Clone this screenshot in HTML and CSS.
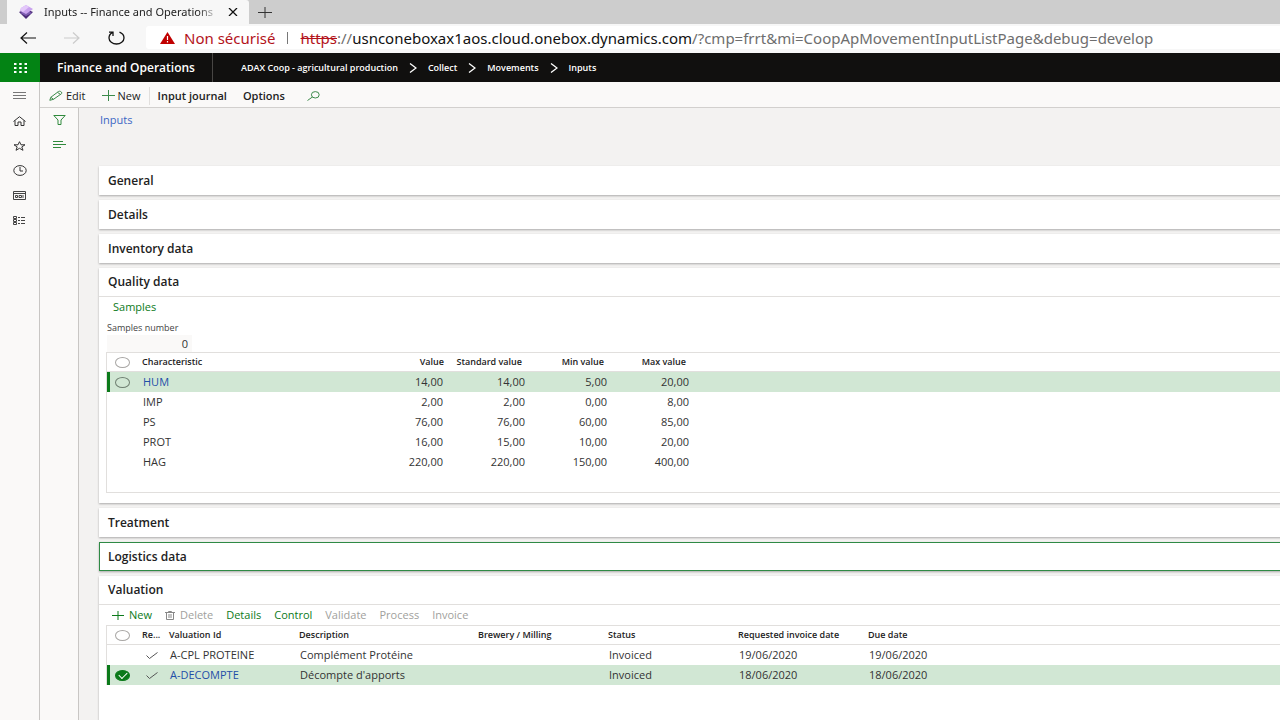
FILE: index.html
```html
<!DOCTYPE html>
<html lang="en">
<head>
    <meta charset="UTF-8">
    <meta name="viewport" content="width=device-width, initial-scale=1.0">
    <title>Inputs -- Finance and Operations</title>
    <link rel="stylesheet" href="styles.css">
</head>
<body>
    <div class="tab-strip">
        <div class="tab">
            <svg class="tab-logo" width="14" height="14" viewBox="0 0 14 14">
                <path d="M0 7l7-3 7 3-7 7z" fill="#4b2a78"/>
                <path d="M1 8l6-3 6 3-6 3z" fill="#7d5bb0"/>
                <path d="M2 3l5-3 7 4-4 3-3 2-6-3z" fill="#c9a2ee"/>
                <path d="M2 3l5-3 3 2-6 5-3-2z" fill="#e3c8fa"/>
            </svg>
            <span class="tab-title">Inputs -- Finance and Operations</span>
            <button class="tab-close" aria-label="Close tab">
                <svg width="10" height="8" viewBox="0 0 10 8"><path d="M1 0l8 8M9 0L1 8" stroke="#111" stroke-width="1.3"/></svg>
            </button>
        </div>
        <button class="tab-new" aria-label="New tab">
            <svg width="14" height="11" viewBox="0 0 14 11"><path d="M7 0v11M0 5.5h14" stroke="#333"/></svg>
        </button>
    </div>

    <div class="address-row">
        <button class="nav-btn" aria-label="Back">
            <svg width="16" height="12" viewBox="0 0 16 12" fill="none" stroke="#111" stroke-width="1.2"><path d="M16 6H1M7 .5L1 6l6 5.5"/></svg>
        </button>
        <button class="nav-btn" aria-label="Forward" disabled>
            <svg width="16" height="12" viewBox="0 0 16 12" fill="none" stroke="#ccc" stroke-width="1.2"><path d="M0 6h15M9 .5L15 6l-6 5.5"/></svg>
        </button>
        <button class="nav-btn" aria-label="Refresh">
            <svg width="18" height="14" viewBox="0 0 18 14" fill="none" stroke="#111" stroke-width="1.3"><path d="M12.5 1.2C15 2.2 17 4.5 17 7c0 3.400-3.500 6-7.500 6S2 10.400 2 7c0-2.300 1.300-4.300 3.500-5.300M2 1.200h4V5"/></svg>
        </button>
        <div class="address">
            <svg width="15" height="12" viewBox="0 0 15 12"><path d="M7.500 0L15 12H0z" fill="#c00000"/><path d="M7.500 4v4M7.500 9v1.500" stroke="#fff" stroke-width="1.2"/></svg>
            <span class="insecure">Non sécurisé</span>
            <span class="address-sep"></span>
            <span class="url"><s>https</s>://<b>usnconeboxax1aos.cloud.onebox.dynamics.com</b>/?cmp=frrt&amp;mi=CoopApMovementInputListPage&amp;debug=develop</span>
        </div>
    </div>

    <header class="top-bar">
        <button class="waffle" aria-label="App launcher">
            <svg width="13" height="10" viewBox="0 0 13 10" fill="#fff">
                <path d="M0 0h2.500v2H0zM5.200 0h2.500v2H5.200zM10.500 0H13v2h-2.500zM0 4h2.500v2H0zM5.200 4h2.500v2H5.200zM10.500 4H13v2h-2.500zM0 8h2.500v2H0zM5.200 8h2.500v2H5.200zM10.500 8H13v2h-2.500z"/>
            </svg>
        </button>
        <div class="product">Finance and Operations</div>
        <nav class="breadcrumb">
            <a href="#">ADAX Coop - agricultural production</a>
            <svg width="8" height="10" viewBox="0 0 8 10"><path d="M1 .5L7 5 1 9.500" fill="none" stroke="#fff" stroke-width="1.3"/></svg>
            <a href="#">Collect</a>
            <svg width="8" height="10" viewBox="0 0 8 10"><path d="M1 .5L7 5 1 9.500" fill="none" stroke="#fff" stroke-width="1.3"/></svg>
            <a href="#">Movements</a>
            <svg width="8" height="10" viewBox="0 0 8 10"><path d="M1 .5L7 5 1 9.500" fill="none" stroke="#fff" stroke-width="1.3"/></svg>
            <a href="#">Inputs</a>
        </nav>
    </header>

    <div class="workspace">
        <nav class="side-nav">
            <button aria-label="Expand the navigation pane">
                <svg width="13" height="10" viewBox="0 0 13 10"><path d="M0 1.500h13M0 4.500h13M0 7.500h13" stroke="#777"/></svg>
            </button>
            <button aria-label="Home">
                <svg width="13" height="10" viewBox="0 0 13 10" fill="none" stroke="#333"><path d="M.5 5.500L6.500.7l6 4.800M2 4.500v5h3V6h3v3.500h3v-5"/></svg>
            </button>
            <button aria-label="Favorites">
                <svg width="13" height="10" viewBox="0 0 13 10" fill="none" stroke="#333"><path d="M6.500.7L8 3.800h4L8.800 5.900 10 9.300 6.500 7.300 3 9.300l1.200-3.400L1 3.800h4z"/></svg>
            </button>
            <button aria-label="Recent">
                <svg width="14" height="11" viewBox="0 0 14 11" fill="none" stroke="#333"><ellipse cx="7" cy="5.500" rx="6.200" ry="4.900"/><path d="M7 2v4h3"/></svg>
            </button>
            <button aria-label="Workspaces">
                <svg width="13" height="9" viewBox="0 0 13 9" fill="none" stroke="#444"><path d="M.5.5h12v8H.5zM.5 2.500h12M2.500 4.500h2v2h-2zM6 4.500h2.500v2H6zM10 4v3"/></svg>
            </button>
            <button aria-label="Modules">
                <svg width="13" height="9" viewBox="0 0 13 9" fill="none" stroke="#444"><path d="M.5.5h3v2h-3zM.5 3.500h3v2h-3zM.5 6.500h3v2h-3zM5 1.500h2M8 1.500h4M5 4.500h2M8 4.500h4M5 7.500h2M8 7.500h4"/></svg>
            </button>
        </nav>

        <div class="main">
            <div class="action-pane">
                <button class="light">
                    <svg width="14" height="11" viewBox="0 0 14 11" fill="none" stroke="#3c8a4a"><path d="M.8 10.300l1-3L9.500 1.500c1.300-1 4.300.8 3 2.200L4.500 9.300zM8.500 2.300l3 2.200M1.800 7.300l2.700 2"/></svg>
                    Edit
                </button>
                <button class="light">
                    <svg width="13" height="11" viewBox="0 0 13 11"><path d="M6.500 0v11M0 5.500h13" stroke="#3c8a4a"/></svg>
                    New
                </button>
                <span class="action-sep"></span>
                <button>Input journal</button>
                <button>Options</button>
                <button class="search" aria-label="Search">
                    <svg width="13" height="10" viewBox="0 0 13 10" fill="none" stroke="#3c8a4a"><ellipse cx="8.300" cy="3.800" rx="3.900" ry="3.200"/><path d="M5.400 6L.5 9.500"/></svg>
                </button>
            </div>

            <div class="page">
                <div class="filter-pane">
                    <button aria-label="Show filters">
                        <svg width="13" height="10" viewBox="0 0 13 10" fill="none" stroke="#2f8a3c"><path d="M.8.5h11.400L8 5v4.500H5V5z"/></svg>
                    </button>
                    <button aria-label="Show list">
                        <svg width="13" height="7" viewBox="0 0 13 7"><path d="M0 .5h10M0 3.500h13M0 6.500h8" stroke="#2f8a3c"/></svg>
                    </button>
                </div>

                <main class="content">
                    <a class="page-title" href="#">Inputs</a>

                    <div class="fast-tabs">
                        <section class="fast-tab"><button class="fast-tab-head">General</button></section>
                        <section class="fast-tab"><button class="fast-tab-head">Details</button></section>
                        <section class="fast-tab"><button class="fast-tab-head">Inventory data</button></section>
                        <section class="fast-tab open">
                            <button class="fast-tab-head">Quality data</button>
                            <div class="fast-tab-body quality">
                                <div class="toolbar samples"><button>Samples</button></div>
                                <div class="field">
                                    <label for="samplesNumber">Samples number</label>
                                    <input type="text" id="samplesNumber" value="0" readonly>
                                </div>
                                <div class="grid quality-grid">
                                    <table>
                                        <colgroup>
                                            <col class="c-select"><col class="c-char"><col class="c-num"><col class="c-num"><col class="c-num"><col class="c-num"><col>
                                        </colgroup>
                                        <thead>
                                            <tr>
                                                <th><input type="checkbox" aria-label="Select all characteristics"></th>
                                                <th>Characteristic</th><th class="num value">Value</th><th class="num">Standard value</th><th class="num">Min value</th><th class="num">Max value</th><th></th>
                                            </tr>
                                        </thead>
                                        <tbody>
                                            <tr class="selected">
                                                <td><input type="checkbox" aria-label="Select HUM"></td>
                                                <td><a href="#">HUM</a></td><td class="num">14,00</td><td class="num">14,00</td><td class="num">5,00</td><td class="num">20,00</td><td></td>
                                            </tr>
                                            <tr><td></td><td>IMP</td><td class="num">2,00</td><td class="num">2,00</td><td class="num">0,00</td><td class="num">8,00</td><td></td></tr>
                                            <tr><td></td><td>PS</td><td class="num">76,00</td><td class="num">76,00</td><td class="num">60,00</td><td class="num">85,00</td><td></td></tr>
                                            <tr><td></td><td>PROT</td><td class="num">16,00</td><td class="num">15,00</td><td class="num">10,00</td><td class="num">20,00</td><td></td></tr>
                                            <tr><td></td><td>HAG</td><td class="num">220,00</td><td class="num">220,00</td><td class="num">150,00</td><td class="num">400,00</td><td></td></tr>
                                        </tbody>
                                    </table>
                                </div>
                            </div>
                        </section>
                        <section class="fast-tab"><button class="fast-tab-head">Treatment</button></section>
                        <section class="fast-tab"><button class="fast-tab-head focused">Logistics data</button></section>
                        <section class="fast-tab open">
                            <button class="fast-tab-head">Valuation</button>
                            <div class="fast-tab-body">
                                <div class="toolbar">
                                    <button>
                                        <svg width="12" height="9" viewBox="0 0 12 9"><path d="M6 0v9M0 4.500h12" stroke="#0b7a1a"/></svg>
                                        New
                                    </button>
                                    <button disabled>
                                        <svg width="10" height="9" viewBox="0 0 10 9" fill="none" stroke="#888"><path d="M0 1.500h10M3.500 1.500v-1h3v1M1.500 1.500v7h7v-7M4 3v4M6 3v4"/></svg>
                                        Delete
                                    </button>
                                    <button>Details</button>
                                    <button>Control</button>
                                    <button disabled>Validate</button>
                                    <button disabled>Process</button>
                                    <button disabled>Invoice</button>
                                </div>
                                <div class="grid">
                                    <table>
                                        <colgroup>
                                            <col class="c-select"><col class="c-flag"><col class="c-field"><col class="c-desc"><col class="c-field"><col class="c-field"><col class="c-field"><col>
                                        </colgroup>
                                        <thead>
                                            <tr>
                                                <th><input type="checkbox" aria-label="Select all valuations"></th>
                                                <th>Re...</th><th>Valuation Id</th><th>Description</th><th>Brewery / Milling</th><th>Status</th><th>Requested invoice date</th><th>Due date</th>
                                            </tr>
                                        </thead>
                                        <tbody>
                                            <tr>
                                                <td></td>
                                                <td class="flag"><svg width="12" height="7" viewBox="0 0 12 7"><path d="M.5 3.500l3 3 8-6" fill="none" stroke="#555"/></svg></td>
                                                <td>A-CPL PROTEINE</td><td>Complément Protéine</td><td></td><td>Invoiced</td><td>19/06/2020</td><td>19/06/2020</td>
                                            </tr>
                                            <tr class="selected">
                                                <td><input type="checkbox" aria-label="Select A-DECOMPTE" checked></td>
                                                <td class="flag"><svg width="12" height="7" viewBox="0 0 12 7"><path d="M.5 3.500l3 3 8-6" fill="none" stroke="#555"/></svg></td>
                                                <td><a href="#">A-DECOMPTE</a></td><td>Décompte d'apports</td><td></td><td>Invoiced</td><td>18/06/2020</td><td>18/06/2020</td>
                                            </tr>
                                        </tbody>
                                    </table>
                                </div>
                            </div>
                        </section>
                    </div>
                </main>
            </div>
        </div>
    </div>
</body>
</html>
```

FILE: styles.css
```css
* {
    box-sizing: border-box;
}
body {
    margin: 0;
    height: 100vh;
    overflow: hidden;
    display: flex;
    flex-direction: column;
    font-family: "Open Sans", "Noto Sans", sans-serif;
    font-size: 11px;
    line-height: 16px;
    color: #333;
    background-color: #f3f2f1;
}
button {
    display: flex;
    align-items: center;
    margin: 0;
    padding: 0;
    border: none;
    background: none;
    font: inherit;
    color: inherit;
    white-space: nowrap;
    cursor: pointer;
}
a {
    color: #1f4fa8;
    text-decoration: none;
}
svg {
    flex-shrink: 0;
}

/* browser bar */
.tab-strip {
    display: flex;
    flex-shrink: 0;
    height: 24px;
    padding-left: 7px;
    font-family: "Noto Sans", sans-serif;
    background-color: #cdcdcd;
}
.tab {
    display: flex;
    align-items: center;
    width: 242px;
    padding: 0 11px 0 12px;
    background-color: #f7f7f7;
    border-radius: 0 3px 0 0;
}
.tab-title {
    flex: 1;
    margin-left: 11px;
    overflow: hidden;
    white-space: nowrap;
    color: #222;
    mask-image: linear-gradient(to right, #000 88%, transparent);
}
.tab-close {
    margin-left: 9px;
}
.tab-new {
    margin-left: 9px;
}
.address-row {
    display: flex;
    flex-shrink: 0;
    align-items: center;
    height: 29px;
    padding: 0 0 2px 14px;
    background-color: #f7f7f7;
}
.nav-btn {
    justify-content: center;
    width: 28px;
    margin-right: 16px;
}
.address {
    display: flex;
    flex: 1;
    align-items: center;
    height: 23px;
    padding-left: 14px;
    overflow: hidden;
    white-space: nowrap;
    background-color: #fff;
    border-radius: 3px 0 0 3px;
    font-family: "Noto Sans", sans-serif;
    font-size: 15px;
}
.insecure {
    margin-left: 9px;
    color: #b3131b;
}
.address-sep {
    width: 1px;
    height: 12px;
    margin: 0 12px;
    background-color: #777;
}
.url {
    color: #6e6e6e;
}
.url s {
    color: #b3131b;
}
.url b {
    font-weight: 400;
    color: #111;
}

/* black header */
.top-bar {
    display: flex;
    flex-shrink: 0;
    align-items: center;
    height: 29px;
    color: #fff;
    background-color: #11100f;
}
.waffle {
    justify-content: center;
    width: 40px;
    height: 29px;
    background-color: #038314;
}
.product {
    width: 173px;
    padding-left: 17px;
    border-right: 1px solid #484644;
    font-size: 12px;
    font-weight: 600;
    line-height: 29px;
}
.breadcrumb {
    display: flex;
    align-items: center;
    gap: 11px;
    padding-left: 28px;
    font-size: 9px;
    font-weight: 600;
}
.breadcrumb a {
    color: #fff;
}

/* shell */
.workspace {
    display: flex;
    flex: 1;
    min-height: 0;
}
.side-nav {
    width: 40px;
    padding-top: 1px;
    background-color: #faf9f8;
    border-right: 1px solid #c8c6c4;
}
.side-nav button {
    justify-content: center;
    width: 100%;
    height: 25px;
}
.main {
    display: flex;
    flex: 1;
    flex-direction: column;
    min-width: 0;
}
.action-pane {
    display: flex;
    flex-shrink: 0;
    align-items: center;
    gap: 16px;
    height: 26px;
    padding: 2px 0 0 9px;
    background-color: #faf9f8;
    border-bottom: 1px solid #d2d0ce;
    font-weight: 600;
    color: #222;
}
.action-pane button {
    gap: 3px;
}
.action-pane .light {
    font-weight: 400;
}
.action-sep {
    width: 1px;
    height: 18px;
    margin: 0 -8px;
    background-color: #e1dfdd;
}
.search {
    margin-left: 6px;
}
.page {
    display: flex;
    flex: 1;
    min-height: 0;
}
.filter-pane {
    width: 39px;
    background-color: #faf9f8;
    border-right: 1px solid #c8c6c4;
}
.filter-pane button {
    justify-content: center;
    width: 100%;
    height: 24px;
}
.content {
    display: flex;
    flex: 1;
    flex-direction: column;
    min-width: 0;
    padding: 4px 0 0 20px;
    overflow: hidden;
}
.page-title {
    align-self: flex-start;
    margin-bottom: 38px;
    padding-left: 1px;
    color: #3b66c4;
}

/* fast tabs, they run past the right edge */
.fast-tabs {
    display: flex;
    flex: 1;
    flex-direction: column;
    gap: 5px;
    margin-right: -4px;
}
.fast-tab {
    background-color: #fff;
    box-shadow: 0 1px 2px rgba(0, 0, 0, 0.3);
}
.fast-tab-head {
    width: 100%;
    height: 29px;
    padding-left: 9px;
    font-size: 12px;
    font-weight: 600;
    color: #222;
}
.open .fast-tab-head {
    border-bottom: 1px solid #e1dfdd;
}
.focused {
    padding-left: 8px;
    border: 1px solid #2f8a45;
}
.fast-tabs > .open:last-child {
    flex: 1;
}
.fast-tab-body {
    padding-left: 7px;
}
.quality {
    padding-bottom: 10px;
}
.toolbar {
    display: flex;
    align-items: center;
    gap: 13px;
    height: 20px;
    padding-left: 6px;
    color: #0b7a1a;
}
.toolbar button {
    gap: 5px;
}
.toolbar button:disabled {
    color: #a19f9d;
}
.samples {
    padding-left: 7px;
}
.field {
    display: flex;
    flex-direction: column;
    align-items: flex-start;
    padding: 4px 0 0 1px;
}
.field label {
    font-size: 9px;
    line-height: 14px;
    color: #444;
}
.field input {
    width: 85px;
    height: 17px;
    padding: 0 4px;
    border: none;
    background-color: #faf9f8;
    font: inherit;
    color: #333;
    text-align: right;
}

/* grids */
.grid {
    border: 1px solid #e1dfdd;
    border-width: 1px 0 0 1px;
}
.quality-grid {
    padding-bottom: 20px;
    border-bottom-width: 1px;
}
table {
    width: 100%;
    table-layout: fixed;
    border-collapse: separate;
    border-spacing: 0;
}
.c-select {
    width: 30px;
}
.c-char {
    width: 228px;
}
.c-num {
    width: 82px;
}
.c-flag {
    width: 27px;
}
.c-field {
    width: 130px;
}
.c-desc {
    width: 179px;
}
th, td {
    height: 20px;
    padding: 0 0 0 6px;
    line-height: 16px;
    text-align: left;
    white-space: nowrap;
}
th {
    height: 19px;
    padding-left: 5px;
    border-bottom: 1px solid #e1dfdd;
    font-size: 9px;
    font-weight: 600;
    color: #222;
}
.num {
    padding-right: 4px;
    text-align: right;
}
th.num {
    padding-right: 7px;
}
th.value {
    padding-right: 3px;
}
th:first-child, td:first-child {
    padding: 0 0 0 8px;
}
.selected {
    background-color: #d1e7d4;
}
.selected td:first-child {
    padding-left: 5px;
    border-left: 3px solid #0b7a1a;
}
td.flag {
    padding-left: 9px;
}
.flag svg {
    display: block;
}
.grid input {
    position: relative;
    display: block;
    appearance: none;
    width: 15px;
    height: 11px;
    margin: 0;
    border: 1px solid #a8a6a4;
    border-radius: 50%;
}
.selected input {
    border-color: #6f7f71;
}
.grid input:checked {
    border-color: #0b7a1a;
    background-color: #0b7a1a;
}
.grid input:checked::after {
    content: "";
    position: absolute;
    left: 3px;
    top: 1px;
    width: 7px;
    height: 4px;
    border: solid #fff;
    border-width: 0 0 1px 1px;
    transform: rotate(-45deg);
}
```
